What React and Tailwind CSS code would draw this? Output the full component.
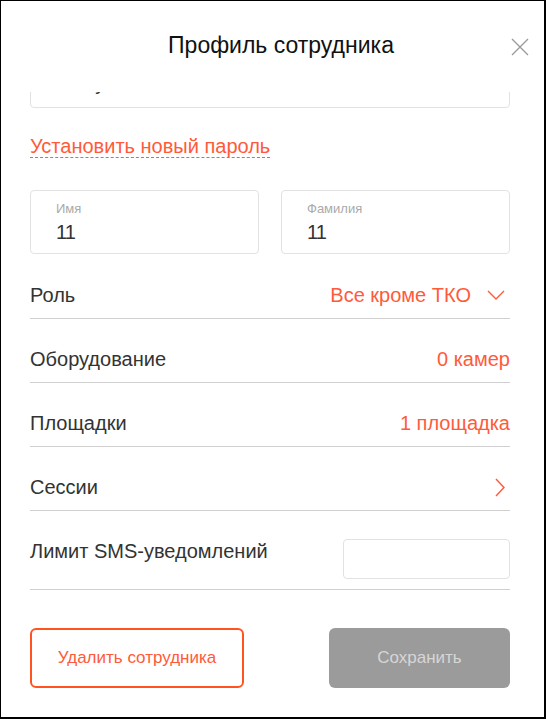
import React from "react";

const font = { fontFamily: '"Liberation Sans", Arial, sans-serif' };

const Row = ({ label, children, first }) => (
  <div
    className={
      "flex items-center justify-between pb-[11px] border-b border-[#d0d0d0] " +
      (first ? "pt-[29px]" : "pt-[28px]")
    }
  >
    <span className="text-[20px] leading-6 text-[#333]">{label}</span>
    {children}
  </div>
);

const NameField = ({ label, value }) => (
  <div className="flex-1 h-[64px] border border-[#e2e2e2] rounded-[4px] pl-[25px] pt-[10px]">
    <div className="text-[13px] leading-4 text-[#aaa]">{label}</div>
    <div className="text-[20px] leading-6 text-[#333] mt-[3px] tracking-[-1px]">{value}</div>
  </div>
);

export default function App() {
  return (
    <div
      style={font}
      className="w-[546px] h-[719px] bg-white border-l border-t border-r-2 border-b-2 border-black flex flex-col"
    >
      <div className="relative h-[91px] shrink-0 flex justify-center pt-[30px] pl-[17px]">
        <h1 className="text-[23px] leading-7 text-[#111]">Профиль сотрудника</h1>
        <button className="absolute right-[15px] top-[37px] w-[18px] h-[18px]">
          <svg viewBox="0 0 18 18" width="18" height="18" fill="none" stroke="#999" strokeWidth="1.3">
            <path d="M1 1L17 17M17 1L1 17" />
          </svg>
        </button>
      </div>

      <div className="flex-1 pl-[29px] pr-[34px]">
        <div className="h-[16px] overflow-hidden">
          <div className="-mt-[51px] h-[67px] border border-[#e2e2e2] rounded-[4px] pl-[25px] pt-[10px]">
            <div className="text-[13px] leading-4 text-[#aaa]">Логин</div>
            <div className="text-[20px] leading-6 text-[#333] mt-[3px] pl-[26px]">Руслан</div>
          </div>
        </div>

        <div className="mt-[26px] leading-6">
          <a className="text-[20px] leading-6 text-[#ff5a3a] border-b border-dashed border-[#ff5a3a] cursor-pointer">
            Установить новый пароль
          </a>
        </div>

        <div className="flex gap-[22px] mt-[30px]">
          <NameField label="Имя" value="11" />
          <NameField label="Фамилия" value="11" />
        </div>

        <Row label="Роль" first>
          <div className="flex items-center gap-[16px] text-[20px] leading-6 text-[#ff5a3a] pr-[5px]">
            <span>Все кроме ТКО</span>
            <svg width="18" height="10" viewBox="0 0 18 10" fill="none" stroke="#ff5a3a" strokeWidth="1.4">
              <path d="M1 1L9 9L17 1" />
            </svg>
          </div>
        </Row>
        <Row label="Оборудование">
          <span className="text-[20px] leading-6 text-[#ff5a3a]">0 камер</span>
        </Row>
        <Row label="Площадки">
          <span className="text-[20px] leading-6 text-[#ff5a3a]">1 площадка</span>
        </Row>
        <Row label="Сессии">
          <svg width="10" height="19" viewBox="0 0 10 19" fill="none" stroke="#ff5a3a" strokeWidth="1.4" className="mr-[5px]">
            <path d="M1 1L9 9.5L1 18" />
          </svg>
        </Row>

        <div className="flex items-start justify-between pt-[28px] pb-[10px] border-b border-[#d0d0d0]">
          <span className="text-[20px] leading-6 text-[#333]">Лимит SMS-уведомлений</span>
          <input className="w-[167px] h-[40px] border border-[#e2e2e2] rounded-[4px] outline-none px-3 text-[16px]" />
        </div>

        <div className="flex justify-between mt-[38px]">
          <button className="w-[214px] h-[60px] border-2 border-[#ff5420] rounded-[6px] text-[17px] text-[#ff5a3a]">
            Удалить сотрудника
          </button>
          <button className="w-[181px] h-[60px] bg-[#9b9b9b] rounded-[6px] text-[17px] text-[#d6d6d6]">
            Сохранить
          </button>
        </div>
      </div>
    </div>
  );
}
